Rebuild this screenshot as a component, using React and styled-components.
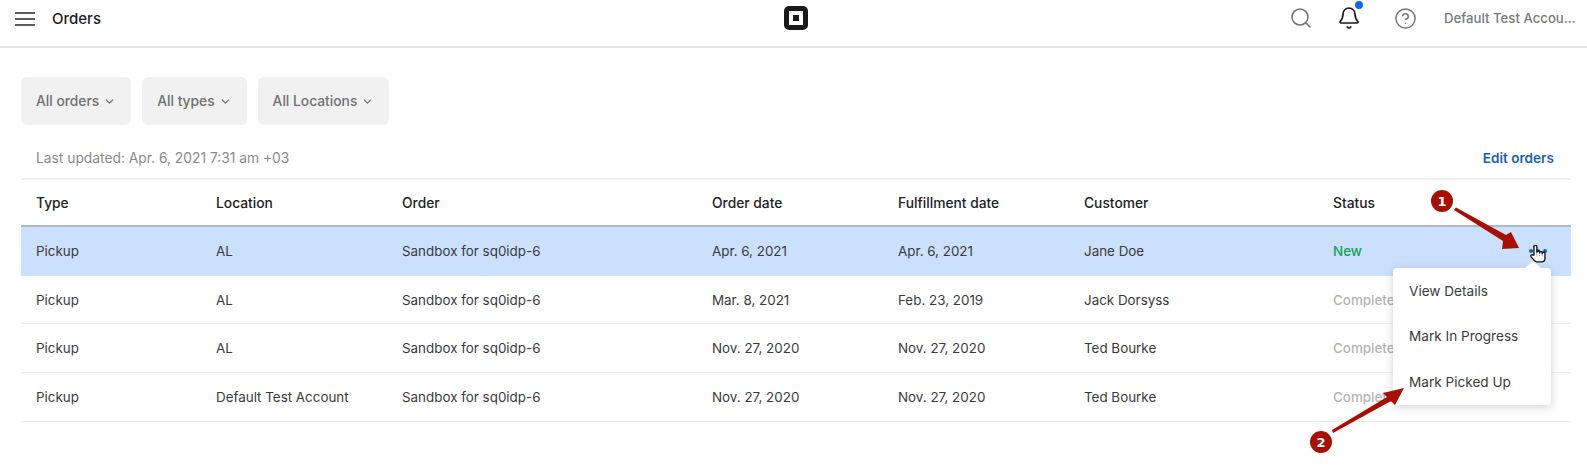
import React from 'react'
import styled, { createGlobalStyle } from 'styled-components';
import { Search, Bell, CircleHelp, ChevronDown } from 'lucide-react';

const COLUMNS = '180px 186px 310px 186px 186px 249px 1fr';

const rows = [
  { type: 'Pickup', location: 'AL', order: 'Sandbox for sq0idp-6', date: 'Apr. 6, 2021', fulfill: 'Apr. 6, 2021', customer: 'Jane Doe', status: 'New' },
  { type: 'Pickup', location: 'AL', order: 'Sandbox for sq0idp-6', date: 'Mar. 8, 2021', fulfill: 'Feb. 23, 2019', customer: 'Jack Dorsyss', status: 'Completed' },
  { type: 'Pickup', location: 'AL', order: 'Sandbox for sq0idp-6', date: 'Nov. 27, 2020', fulfill: 'Nov. 27, 2020', customer: 'Ted Bourke', status: 'Completed' },
  { type: 'Pickup', location: 'Default Test Account', order: 'Sandbox for sq0idp-6', date: 'Nov. 27, 2020', fulfill: 'Nov. 27, 2020', customer: 'Ted Bourke', status: 'Completed' },
];

const headings = ['Type', 'Location', 'Order', 'Order date', 'Fulfillment date', 'Customer', 'Status'];
const filters = ['All orders', 'All types', 'All Locations'];
const menuItems = ['View Details', 'Mark In Progress', 'Mark Picked Up'];

const App = () => {
  return (
    <Page>
      <GlobalStyle />
      <Header>
        <HeaderLeft>
          <Burger><span /><span /><span /></Burger>
          <Title>Orders</Title>
        </HeaderLeft>
        <Logo><LogoDot /></Logo>
        <HeaderRight>
          <IconSlot $color="#777" $gap={24}><Search size={24} strokeWidth={1.6} /></IconSlot>
          <IconSlot $color="#1a1a1a" $gap={32}>
            <Bell size={24} strokeWidth={1.7} />
            <BellDot />
          </IconSlot>
          <IconSlot $color="#777" $gap={27}><CircleHelp size={23} strokeWidth={1.6} /></IconSlot>
          <Account>Default Test Accou...</Account>
        </HeaderRight>
      </Header>

      <Content>
        <Filters>
          {filters.map((f) => (
            <FilterButton key={f}>{f} <ChevronDown size={13} strokeWidth={2.4} /></FilterButton>
          ))}
        </Filters>
        <InfoRow>
          <Updated>Last updated: Apr. 6, 2021 7:31 am +03</Updated>
          <EditLink>Edit orders</EditLink>
        </InfoRow>
        <Table>
          <HeadRow>
            {headings.map((h) => <HeadCell key={h}>{h}</HeadCell>)}
          </HeadRow>
          {rows.map((row, index) => (
            <Row key={index} $active={index === 0}>
              <Cell>{row.type}</Cell>
              <Cell>{row.location}</Cell>
              <Cell>{row.order}</Cell>
              <Cell>{row.date}</Cell>
              <Cell>{row.fulfill}</Cell>
              <Cell>{row.customer}</Cell>
              <StatusCell $isNew={row.status === 'New'}>{row.status}</StatusCell>
            </Row>
          ))}
        </Table>
      </Content>

      <Menu>
        {menuItems.map((item) => <MenuItem key={item}>{item}</MenuItem>)}
      </Menu>

      <MoreDots><span /><span /><span /></MoreDots>
      <Cursor viewBox="0 0 16 16" width="18" height="18">
        <path d="M3.5 9 V1.5 a1.3 1.3 0 0 1 2.6 0 V6.5 a1.2 1.2 0 0 1 2.4 0 V7 a1.2 1.2 0 0 1 2.4 0 V7.6 a1.2 1.2 0 0 1 2.4 0 V12 q0 3 -3 3 H6 q-1.5 0 -2.5 -1.5 L1 10.5 q-.7 -1.3 .5 -1.7 q1 -.3 2 .2 Z" fill="#fff" stroke="#111" strokeWidth="1.2" strokeLinejoin="round" />
        <path d="M6.1 6.5 V10 M8.5 7 V10 M10.9 7.6 V10" stroke="#555" strokeWidth="0.7" fill="none" strokeDasharray="1 0.6" />
      </Cursor>

      <Annotations viewBox="0 0 1587 470" width="1587" height="470">
        <path d="M1454 210 L1456 207.5 L1506 235 L1511 232 L1519 248 L1502 249 L1503 241 Z" fill="#a80f04" />
        <path d="M1333 433 L1332 430 L1387 397 L1383 393 L1404 388 L1395 405 L1391 401 Z" fill="#a80f04" />
      </Annotations>
      <Badge $x={1442} $y={201}>1</Badge>
      <Badge $x={1321} $y={442}>2</Badge>
    </Page>
  )
}

const GlobalStyle = createGlobalStyle`
  body {
    margin: 0;
    background: #fff;
    font-family: Inter, "Liberation Sans", sans-serif;
  }
`;

const Page = styled.div`
  position: relative;
  width: 1587px;
  height: 470px;
  overflow: hidden;
  background: #fff;
`;

const Header = styled.header`
  display: grid;
  grid-template-columns: 1fr auto 1fr;
  align-items: center;
  height: 46px;
  padding: 0 9px 0 15px;
  border-bottom: 2px solid #e6e6e6;
`;

const HeaderLeft = styled.div`
  display: flex;
  align-items: center;
  gap: 17px;
  margin-top: -9px;
`;

const Burger = styled.div`
  display: flex;
  flex-direction: column;
  gap: 4px;
  width: 20px;

  span {
    height: 2px;
    background: #5c5c5c;
  }
`;

const Title = styled.div`
  font-size: 15px;
  font-weight: 500;
  color: #1c1c1c;
`;

const Logo = styled.div`
  display: flex;
  align-items: center;
  justify-content: center;
  box-sizing: border-box;
  width: 24px;
  height: 24px;
  margin: -11px 0 0 -2px;
  border: 5px solid #1a1a1a;
  border-radius: 5px;
`;

const LogoDot = styled.div`
  width: 6px;
  height: 6px;
  background: #1a1a1a;
`;

const HeaderRight = styled.div`
  display: flex;
  align-items: center;
  justify-content: flex-end;
  margin-top: -10px;
`;

const IconSlot = styled.div`
  position: relative;
  display: flex;
  align-items: center;
  justify-content: center;
  width: 24px;
  height: 24px;
  margin-right: ${({$gap}) => $gap}px;
  color: ${({$color}) => $color};
`;

const BellDot = styled.div`
  position: absolute;
  top: -5px;
  right: -2px;
  width: 8px;
  height: 8px;
  border-radius: 50%;
  background: #0a6cf0;
`;

const Account = styled.div`
  width: 134px;
  font-size: 13.2px;
  font-weight: 500;
  color: #7a7a7a;
  white-space: nowrap;
`;

const Content = styled.main`
  padding: 29px 16px 0 21px;
`;

const Filters = styled.div`
  display: flex;
  gap: 11px;
`;

const FilterButton = styled.div`
  display: flex;
  align-items: center;
  gap: 4px;
  height: 48px;
  padding: 0 15px;
  border-radius: 6px;
  background: #f1f1f1;
  font-size: 13.8px;
  font-weight: 500;
  color: #707070;
`;

const InfoRow = styled.div`
  display: flex;
  align-items: center;
  justify-content: space-between;
  box-sizing: border-box;
  height: 53px;
  padding: 12px 17px 0 15px;
`;

const Updated = styled.div`
  font-size: 13.8px;
  color: #8a8a8a;
`;

const EditLink = styled.div`
  font-size: 13.6px;
  font-weight: 600;
  color: #1a5fb4;
`;

const Table = styled.div`
  border-top: 2px solid #f0f0f0;
`;

const HeadRow = styled.div`
  display: grid;
  grid-template-columns: ${COLUMNS};
  align-items: center;
  height: 45px;
  border-bottom: 2px solid #b4b8bf;
`;

const HeadCell = styled.div`
  padding-left: 15px;
  font-size: 13.8px;
  font-weight: 500;
  color: #222;
`;

const Row = styled.div`
  display: grid;
  grid-template-columns: ${COLUMNS};
  align-items: center;
  height: 47.7px;
  background: ${({$active}) => ($active ? '#cbe0fc' : '#fff')};
  border-bottom: 1px solid ${({$active}) => ($active ? '#cbe0fc' : '#ececec')};
`;

const Cell = styled.div`
  padding-left: 15px;
  font-size: 13.4px;
  color: #3a3a3a;
  white-space: nowrap;
`;

const StatusCell = styled(Cell)`
  font-weight: 500;
  color: ${({$isNew}) => ($isNew ? '#12a150' : '#b5b5b5')};
`;

const Menu = styled.div`
  position: absolute;
  top: 268px;
  left: 1393px;
  width: 158px;
  height: 137px;
  display: flex;
  flex-direction: column;
  justify-content: space-around;
  box-sizing: border-box;
  padding: 0 16px 0;
  border-radius: 4px;
  background: #fff;
  box-shadow: 0 2px 10px rgba(0, 0, 0, 0.18);

  &::before {
    content: '';
    position: absolute;
    top: -7px;
    left: 132px;
    border-left: 8px solid transparent;
    border-right: 8px solid transparent;
    border-bottom: 7px solid #fff;
  }
`;

const MenuItem = styled.div`
  font-size: 13.6px;
  color: #3a3a3a;
`;

const MoreDots = styled.div`
  position: absolute;
  top: 249px;
  left: 1529px;
  display: flex;
  gap: 3px;

  span {
    width: 4px;
    height: 4px;
    border-radius: 50%;
    background: #1a5fb4;
  }
`;

const Cursor = styled.svg`
  position: absolute;
  top: 245px;
  left: 1530px;
`;

const Annotations = styled.svg`
  position: absolute;
  top: 0;
  left: 0;
  pointer-events: none;
`;

const Badge = styled.div`
  position: absolute;
  top: ${({$y}) => $y - 11}px;
  left: ${({$x}) => $x - 11}px;
  display: flex;
  align-items: center;
  justify-content: center;
  width: 22px;
  height: 22px;
  border-radius: 50%;
  background: #a80f04;
  font-family: "DejaVu Sans", sans-serif;
  font-size: 13px;
  font-weight: 700;
  color: #fff;
`;

export default App
